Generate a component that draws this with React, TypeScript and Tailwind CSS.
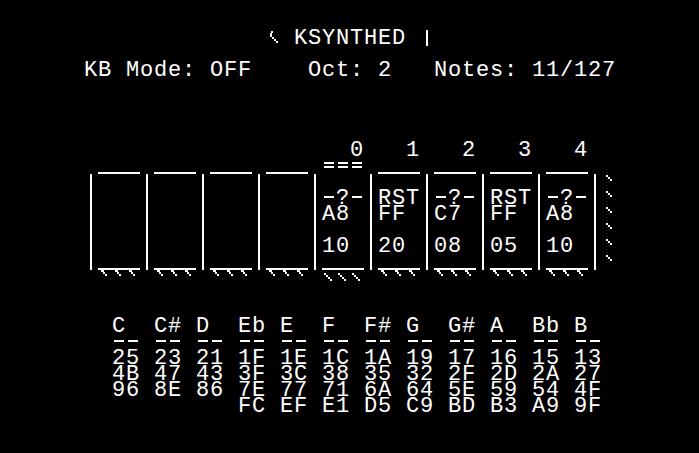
import type { ReactNode } from 'react';

// 40x24 text screen, each cell 14x16
const COLS = 40;
const ROWS = 24;

type Slot = { head: string; note: string; len: string };

const slots: Slot[] = [
  { head: '-?-', note: 'A8', len: '10' },
  { head: 'RST', note: 'FF', len: '20' },
  { head: '-?-', note: 'C7', len: '08' },
  { head: 'RST', note: 'FF', len: '05' },
  { head: '-?-', note: 'A8', len: '10' },
];

const notes: { name: string; vals: string[] }[] = [
  { name: 'C', vals: ['25', '4B', '96'] },
  { name: 'C#', vals: ['23', '47', '8E'] },
  { name: 'D', vals: ['21', '43', '86'] },
  { name: 'Eb', vals: ['1F', '3F', '7E', 'FC'] },
  { name: 'E', vals: ['1E', '3C', '77', 'EF'] },
  { name: 'F', vals: ['1C', '38', '71', 'E1'] },
  { name: 'F#', vals: ['1A', '35', '6A', 'D5'] },
  { name: 'G', vals: ['19', '32', '64', 'C9'] },
  { name: 'G#', vals: ['17', '2F', '5E', 'BD'] },
  { name: 'A', vals: ['16', '2D', '59', 'B3'] },
  { name: 'Bb', vals: ['15', '2A', '54', 'A9'] },
  { name: 'B', vals: ['13', '27', '4F', '9F'] },
];

function buildScreen(): string[] {
  const grid = Array.from({ length: ROWS }, () => Array<string>(COLS).fill(' '));
  const put = (r: number, c: number, s: string) => {
    for (let i = 0; i < s.length; i++) grid[r][c + i] = s[i];
  };

  put(0, 14, '@ KSYNTHED !');
  put(2, 1, 'KB Mode: OFF    Oct: 2   Notes: 11/127');

  for (let i = 0; i < 5; i++) put(7, 20 + 4 * i, String(i));

  for (let b = 0; b < 9; b++) {
    const c = 2 + 4 * b;
    put(8, c, b === 4 ? '===' : '___');
    put(14, c, '___');
    put(15, c, b === 4 ? '^^^' : '~~~');
  }
  for (let r = 9; r <= 14; r++) {
    for (let b = 0; b < 10; b++) put(r, 1 + 4 * b, '|');
    put(r, 38, '`');
  }
  slots.forEach((s, i) => {
    const c = 18 + 4 * i;
    put(10, c, s.head);
    put(11, c, s.note);
    put(13, c, s.len);
  });

  notes.forEach((n, i) => {
    const c = 3 + 3 * i;
    put(18, c, n.name);
    put(19, c, '--');
    n.vals.forEach((v, j) => put(20 + j, c, v));
  });

  return grid.map((row) => row.join(''));
}

const SPECIAL = '|!_=-`~^@';

function Glyph({ ch }: { ch: string }) {
  let inner: ReactNode = null;
  switch (ch) {
    case '|':
      inner = <div className="absolute left-[6px] top-0 h-4 w-[2px] bg-white" />;
      break;
    case '!':
      inner = <div className="absolute left-[6px] top-0 h-4 w-[2px] bg-white" />;
      break;
    case '_':
      inner = <div className="absolute bottom-0 left-0 h-[2px] w-[14px] bg-white" />;
      break;
    case '-':
      inner = <div className="absolute left-[2px] top-[6px] h-[2px] w-[10px] bg-white" />;
      break;
    case '=':
      inner = (
        <>
          <div className="absolute left-[2px] top-[4px] h-[2px] w-[10px] bg-white" />
          <div className="absolute left-[2px] top-[8px] h-[2px] w-[10px] bg-white" />
        </>
      );
      break;
    case '`':
      inner = (
        <svg className="absolute inset-0" width="14" height="16" fill="white">
          <rect x="4" y="1" width="2" height="2" />
          <rect x="6" y="3" width="2" height="2" />
          <rect x="8" y="5" width="2" height="2" />
        </svg>
      );
      break;
    case '~':
      inner = (
        <svg className="absolute inset-0" width="14" height="16" fill="white">
          <rect x="3" y="0" width="3" height="2" />
          <rect x="5" y="2" width="2" height="2" />
          <rect x="7" y="4" width="2" height="2" />
        </svg>
      );
      break;
    case '^':
      inner = (
        <svg className="absolute inset-0" width="14" height="16" fill="white">
          <rect x="2" y="3" width="2" height="2" />
          <rect x="4" y="5" width="2" height="2" />
          <rect x="6" y="7" width="2" height="2" />
          <rect x="8" y="9" width="2" height="2" />
        </svg>
      );
      break;
    case '@':
      inner = (
        <svg className="absolute inset-0" width="14" height="16" fill="white">
          <rect x="5" y="1" width="2" height="2" />
          <rect x="4" y="3" width="2" height="2" />
          <rect x="4" y="5" width="2" height="2" />
          <rect x="6" y="7" width="2" height="2" />
          <rect x="8" y="9" width="2" height="2" />
          <rect x="10" y="11" width="2" height="2" />
        </svg>
      );
      break;
  }
  return <div className="relative h-4 w-[14px] shrink-0">{inner}</div>;
}

function ScreenRow({ text }: { text: string }) {
  const parts: ReactNode[] = [];
  let run = '';
  const flush = (key: string) => {
    if (!run) return;
    parts.push(
      <span
        key={key}
        className="relative top-[1px] block h-4 shrink-0 overflow-visible whitespace-pre text-[22px] leading-4 tracking-[0.8px]"
        style={{ width: run.length * 14 }}
      >
        {run}
      </span>
    );
    run = '';
  };
  for (let i = 0; i < text.length; i++) {
    const ch = text[i];
    if (SPECIAL.includes(ch)) {
      flush(`t${i}`);
      parts.push(<Glyph key={`g${i}`} ch={ch} />);
    } else {
      run += ch;
    }
  }
  flush('end');
  return <div className="flex h-4">{parts}</div>;
}

export default function App() {
  const screen = buildScreen();
  return (
    <div className="min-h-screen bg-black">
      <div className="h-[453px] w-[699px] bg-black pl-[70px] pt-[30px] font-['Liberation_Mono',monospace] text-white">
        {screen.map((row, i) => (
          <ScreenRow key={i} text={row} />
        ))}
      </div>
    </div>
  );
}
